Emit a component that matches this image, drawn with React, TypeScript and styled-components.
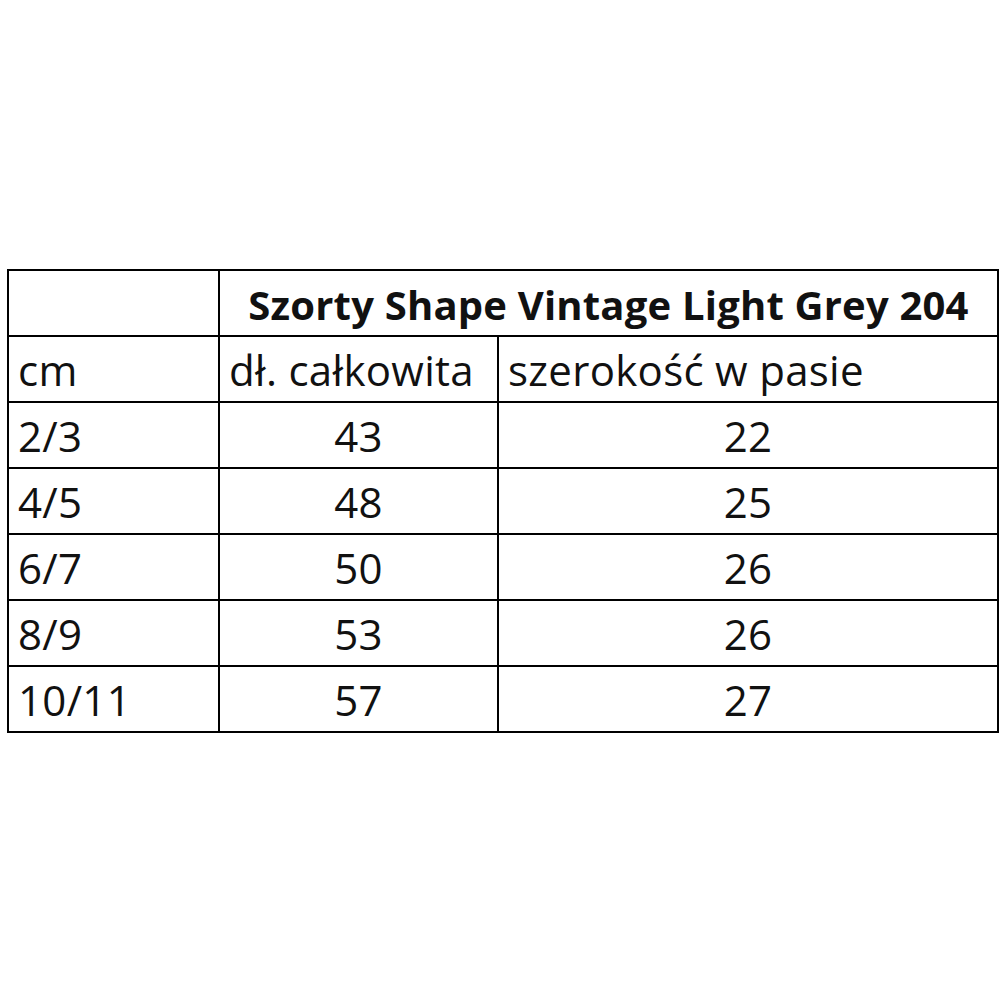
import * as React from 'react';
import styled, { createGlobalStyle } from 'styled-components';

const GlobalStyle = createGlobalStyle`
  html, body {
    margin: 0;
    padding: 0;
    background: #fff;
  }
  body {
    font-family: "Open Sans", "Liberation Sans", sans-serif;
    color: #111;
  }
`;

const Page = styled.div`
  width: 1000px;
  height: 1000px;
  padding: 269px 0 0 7px;
  box-sizing: border-box;
`;

const Table = styled.table`
  border-collapse: collapse;
  table-layout: fixed;
  width: 990px;
`;

const Col = styled.col<{ $w: number }>`
  width: ${(p) => p.$w}px;
`;

const Cell = styled.td<{ $align?: 'left' | 'center' }>`
  border: 2px solid #000;
  height: 54px;
  padding: 0 9px 10px;
  vertical-align: bottom;
  font-size: 42px;
  line-height: 1;
  letter-spacing: 0.3px;
  white-space: nowrap;
  overflow: hidden;
  text-align: ${(p) => p.$align || 'left'};
`;

const Title = styled(Cell)`
  font-weight: 700;
  text-align: center;
  font-size: 40px;
  letter-spacing: 0.2px;
`;

interface SizeRow {
  size: string
  length: number
  waist: number
}

const rows: SizeRow[] = [
  { size: '2/3', length: 43, waist: 22 },
  { size: '4/5', length: 48, waist: 25 },
  { size: '6/7', length: 50, waist: 26 },
  { size: '8/9', length: 53, waist: 26 },
  { size: '10/11', length: 57, waist: 27 },
];

export default function App() {
  return (
    <>
      <GlobalStyle />
      <Page>
        <Table>
          <colgroup>
            <Col $w={211} />
            <Col $w={279} />
            <Col $w={500} />
          </colgroup>
          <tbody>
            <tr>
              <Cell></Cell>
              <Title colSpan={2}>Szorty Shape Vintage Light Grey 204</Title>
            </tr>
            <tr>
              <Cell>cm</Cell>
              <Cell>dł. całkowita</Cell>
              <Cell>szerokość w pasie</Cell>
            </tr>
            {rows.map((row) =>
              <tr key={row.size}>
                <Cell>{row.size}</Cell>
                <Cell $align="center">{row.length}</Cell>
                <Cell $align="center">{row.waist}</Cell>
              </tr>
            )}
          </tbody>
        </Table>
      </Page>
    </>
  );
}
